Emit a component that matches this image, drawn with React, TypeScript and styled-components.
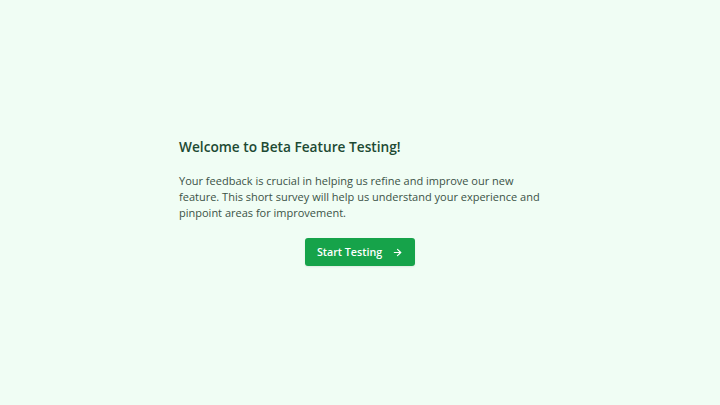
import styled, { createGlobalStyle } from "styled-components";
import { ArrowRight } from "lucide-react";

const GlobalStyle = createGlobalStyle`
  html, body {
    margin: 0;
    padding: 0;
    background: #f0fdf4;
  }
  body {
    font-family: "Open Sans", "Noto Sans", sans-serif;
  }
`;

const Page = styled.main`
  min-height: 405px;
  display: flex;
  align-items: center;
  justify-content: center;
`;

const Card = styled.section`
  width: 362px;
  display: flex;
  flex-direction: column;
`;

const Title = styled.h1`
  margin: 0 0 18px;
  font-size: 13.7px;
  line-height: 16px;
  font-weight: 600;
  color: #1d4a33;
`;

const Text = styled.p`
  margin: 0 0 17px;
  font-size: 11px;
  line-height: 16px;
  color: #3b5246;
`;

const Button = styled.button`
  align-self: center;
  display: flex;
  align-items: center;
  gap: 10px;
  height: 28px;
  padding: 0 12px;
  border: none;
  border-radius: 3px;
  background: #16a34a;
  color: #ffffff;
  font-family: inherit;
  font-size: 10.7px;
  font-weight: 600;
  box-shadow: 0 1px 2px rgba(0, 0, 0, 0.08);
  cursor: pointer;
`;

export default function App() {
  return (
    <>
      <GlobalStyle />
      <Page>
        <Card>
          <Title>Welcome to Beta Feature Testing!</Title>
          <Text>
            Your feedback is crucial in helping us refine and improve our new
            feature. This short survey will help us understand your experience
            and pinpoint areas for improvement.
          </Text>
          <Button>
            Start Testing
            <ArrowRight size={11} strokeWidth={2.5} />
          </Button>
        </Card>
      </Page>
    </>
  );
}
